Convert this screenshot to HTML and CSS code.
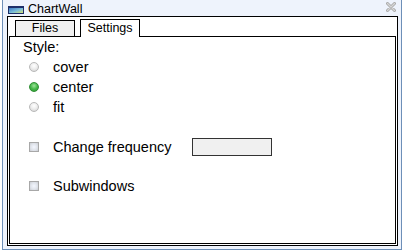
FILE: index.html
```html
<!DOCTYPE html>
<html lang="en">
<head>
  <meta charset="UTF-8">
  <title>ChartWall</title>
  <link rel="stylesheet" href="styles.css">
</head>
<body>

  <div class="window">
    <div class="titlebar">
      <svg class="app-icon" width="16" height="8" viewBox="0 0 16 8">
        <defs>
          <linearGradient id="sky" x1="0" y1="0" x2="1" y2="1">
            <stop offset="0" stop-color="#3a78c8"/>
            <stop offset="0.55" stop-color="#7cc0d8"/>
            <stop offset="1" stop-color="#d8e070"/>
          </linearGradient>
        </defs>
        <rect x="0" y="0" width="16" height="8" fill="#1d2f6a"/>
        <rect x="1" y="2" width="14" height="5" fill="url(#sky)"/>
      </svg>
      <span class="title">ChartWall</span>
      <svg class="close" width="10" height="10" viewBox="0 0 10 10">
        <path d="M1.5 1.5 L8.5 8.5 M8.5 1.5 L1.5 8.5" stroke="#a9a9a9" stroke-width="3" stroke-linecap="round"/>
        <path d="M1.5 1.5 L8.5 8.5 M8.5 1.5 L1.5 8.5" stroke="#d6d6d6" stroke-width="1.2" stroke-linecap="round"/>
      </svg>
    </div>

    <div class="frame">
      <div class="tabs">
        <div class="tab">Files</div>
        <div class="tab active">Settings</div>
      </div>

      <div class="panel">
        <div class="label">Style:</div>

        <div class="row">
          <span class="radio"></span>
          <span>cover</span>
        </div>
        <div class="row">
          <span class="radio checked"></span>
          <span>center</span>
        </div>
        <div class="row">
          <span class="radio"></span>
          <span>fit</span>
        </div>

        <div class="row spaced">
          <span class="check"></span>
          <span>Change frequency</span>
          <input class="field" type="text">
        </div>
        <div class="row spaced2">
          <span class="check"></span>
          <span>Subwindows</span>
        </div>
      </div>
    </div>
  </div>

</body>
</html>
```

FILE: styles.css
```css
html, body {
  margin: 0;
  padding: 0;
}

body {
  width: 404px;
  height: 252px;
  background: #ffffff;
  font-family: "Liberation Sans", Arial, sans-serif;
  color: #000;
  overflow: hidden;
}

.window {
  margin-left: 2px;
  width: 398px;
  height: 249px;
  background: #eef3fc;
  border: 1px solid #6d8fb8;
  border-top: none;
  display: flex;
  flex-direction: column;
}

.titlebar {
  height: 16px;
  box-sizing: border-box;
  padding: 0 0 0 5px;
  display: flex;
  align-items: center;
}

.app-icon {
  margin-top: 3px;
}

.title {
  margin-left: 4px;
  margin-top: 3px;
  font-size: 12.5px;
  line-height: 13px;
}

.close {
  margin-left: auto;
  margin-right: 5px;
  align-self: flex-start;
  margin-top: 2px;
}

.frame {
  flex: 1;
  margin: 0 3px 3px 4px;
  border: 1px solid #000;
  background: #fff;
  padding: 0 1px 1px 1px;
  display: flex;
  flex-direction: column;
}

.tabs {
  height: 19px;
  display: flex;
  align-items: flex-end;
  padding-left: 6px;
  gap: 5px;
}

.tab {
  width: 58px;
  height: 15px;
  border: 1px solid #000;
  border-bottom: none;
  background: #f0f0f0;
  font-size: 12.5px;
  line-height: 15px;
  text-align: center;
}

.tab.active {
  height: 17px;
  background: #fff;
  line-height: 16px;
  margin-bottom: -1px;
  position: relative;
  z-index: 1;
}

.panel {
  flex: 1;
  border: 1px solid #000;
  padding-left: 13px;
  font-size: 14.5px;
}

.label {
  height: 20px;
  line-height: 20px;
}

.row {
  height: 20px;
  display: flex;
  align-items: center;
  padding-left: 6px;
}

.row.spaced {
  margin-top: 20px;
}

.row.spaced2 {
  margin-top: 19px;
}

.radio {
  width: 10px;
  height: 10px;
  box-sizing: border-box;
  border-radius: 50%;
  border: 1px solid #b9b9b9;
  background: radial-gradient(circle at 50% 35%, #ffffff 0, #eeeeee 45%, #cfcfcf 100%);
  margin-right: 14px;
}

.radio.checked {
  border-color: #2f8f33;
  background: radial-gradient(circle at 50% 35%, #9fe39a 0, #46b84a 50%, #2c9430 100%);
}

.check {
  width: 10px;
  height: 10px;
  box-sizing: border-box;
  border: 1px solid #a8a8a8;
  background: radial-gradient(circle at 50% 50%, #f4f7ff 0, #dfe3ea 60%, #c9cbd0 100%);
  margin-right: 14px;
}

.field {
  margin-left: 20px;
  width: 80px;
  height: 18px;
  box-sizing: border-box;
  border: 1px solid #333;
  background: #f0f0f0;
  padding: 0;
}
```
